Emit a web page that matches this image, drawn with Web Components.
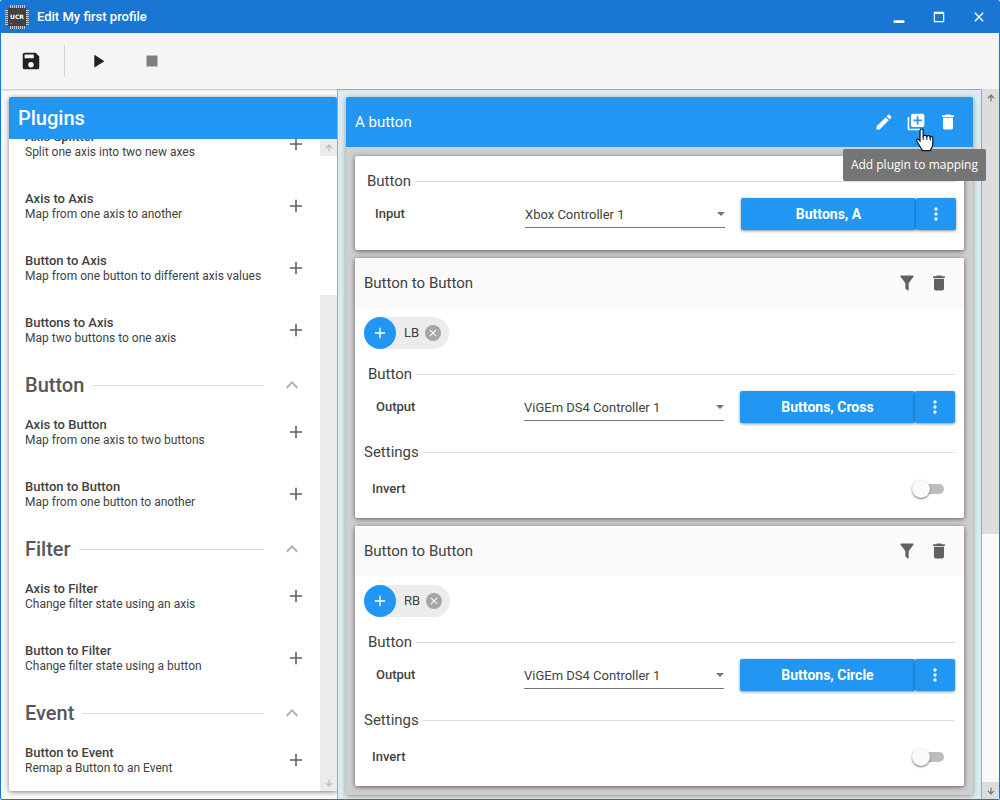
<!DOCTYPE html>
<html lang="en">
<head>
<meta charset="utf-8">
<title>Edit My first profile</title>
<style>
  html, body { height: 100%; margin: 0; }
  body { font-family: Roboto, "Liberation Sans", sans-serif; color: #424242; background: #fff; }
</style>
</head>
<body>

<ucr-window heading="Edit My first profile">
  <ucr-toolbar slot="toolbar"></ucr-toolbar>

  <ucr-plugin-panel slot="side" heading="Plugins">
    <ucr-plugin name="Axis Splitter">Split one axis into two new axes</ucr-plugin>
    <ucr-plugin name="Axis to Axis">Map from one axis to another</ucr-plugin>
    <ucr-plugin name="Button to Axis">Map from one button to different axis values</ucr-plugin>
    <ucr-plugin name="Buttons to Axis">Map two buttons to one axis</ucr-plugin>
    <ucr-category name="Button"></ucr-category>
    <ucr-plugin name="Axis to Button">Map from one axis to two buttons</ucr-plugin>
    <ucr-plugin name="Button to Button">Map from one button to another</ucr-plugin>
    <ucr-category name="Filter"></ucr-category>
    <ucr-plugin name="Axis to Filter">Change filter state using an axis</ucr-plugin>
    <ucr-plugin name="Button to Filter">Change filter state using a button</ucr-plugin>
    <ucr-category name="Event"></ucr-category>
    <ucr-plugin name="Button to Event">Remap a Button to an Event</ucr-plugin>
  </ucr-plugin-panel>

  <ucr-mapping heading="A button" hint="Add plugin to mapping">
    <ucr-card>
      <ucr-binding group="Button" label="Input" device="Xbox Controller 1" value="Buttons, A"></ucr-binding>
    </ucr-card>
    <ucr-card heading="Button to Button" filter="LB">
      <ucr-binding group="Button" label="Output" device="ViGEm DS4 Controller 1" value="Buttons, Cross"></ucr-binding>
      <ucr-setting group="Settings" label="Invert"></ucr-setting>
    </ucr-card>
    <ucr-card heading="Button to Button" filter="RB">
      <ucr-binding group="Button" label="Output" device="ViGEm DS4 Controller 1" value="Buttons, Circle"></ucr-binding>
      <ucr-setting group="Settings" label="Invert"></ucr-setting>
    </ucr-card>
  </ucr-mapping>
</ucr-window>

<script>
const ICONS = {
  save: 'M15,9H5V5H15M12,19A3,3 0 0,1 9,16A3,3 0 0,1 12,13A3,3 0 0,1 15,16A3,3 0 0,1 12,19M17,3H5C3.89,3 3,3.9 3,5V19A2,2 0 0,0 5,21H19A2,2 0 0,0 21,19V7L17,3Z',
  play: 'M8,5.14V19.14L19,12.14L8,5.14Z',
  stop: 'M18,18H6V6H18V18Z',
  pencil: 'M20.71,7.04C21.1,6.65 21.1,6 20.71,5.63L18.37,3.29C18,2.9 17.35,2.9 16.96,3.29L15.12,5.12L18.87,8.87M3,17.25V21H6.75L17.81,9.93L14.06,6.18L3,17.25Z',
  addBox: 'M4,6H2V20A2,2 0 0,0 4,22H18V20H4V6M20,2H8A2,2 0 0,0 6,4V16A2,2 0 0,0 8,18H20A2,2 0 0,0 22,16V4A2,2 0 0,0 20,2M19,11H15V15H13V11H9V9H13V5H15V9H19V11Z',
  trash: 'M19,4H15.5L14.5,3H9.5L8.5,4H5V6H19M6,19A2,2 0 0,0 8,21H16A2,2 0 0,0 18,19V7H6V19Z',
  plus: 'M18.2,12.8H12.8V18.2H11.2V12.8H5.8V11.2H11.2V5.8H12.8V11.2H18.2Z',
  chevron: 'M7.41,15.41L12,10.83L16.59,15.41L18,14L12,8L6,14L7.41,15.41Z',
  funnel: 'M14,12V19.88C14.04,20.18 13.94,20.5 13.71,20.71C13.32,21.1 12.69,21.1 12.3,20.71L10.29,18.7C10.06,18.47 9.96,18.16 10,17.87V12H9.97L4.21,4.62C3.87,4.19 3.95,3.56 4.38,3.22C4.57,3.08 4.78,3 5,3V3H19V3C19.22,3 19.43,3.08 19.62,3.22C20.05,3.56 20.13,4.19 19.79,4.62L14.03,12H14Z',
  dots: 'M12,16A2,2 0 0,1 14,18A2,2 0 0,1 12,20A2,2 0 0,1 10,18A2,2 0 0,1 12,16M12,10A2,2 0 0,1 14,12A2,2 0 0,1 12,14A2,2 0 0,1 10,12A2,2 0 0,1 12,10M12,4A2,2 0 0,1 14,6A2,2 0 0,1 12,8A2,2 0 0,1 10,6A2,2 0 0,1 12,4Z',
  cross: 'M19,6.41L17.59,5L12,10.59L6.41,5L5,6.41L10.59,12L5,17.59L6.41,19L12,13.41L17.59,19L19,17.59L13.41,12L19,6.41Z',
  minimize: 'M4,17H20V21H4Z',
  maximize: 'M3,3H21V21H3ZM5,7V19H19V7Z',
  arrowUp: 'M10.5,20V8.5L5.5,13.5L3.5,11.5L12,3L20.5,11.5L18.5,13.5L13.5,8.5V20Z',
  arrowDown: 'M10.5,4V15.5L5.5,10.5L3.5,12.5L12,21L20.5,12.5L18.5,10.5L13.5,15.5V4Z'
};
const icon = (name, size) =>
  `<svg width="${size}" height="${size}" viewBox="0 0 24 24" fill="currentColor" fill-rule="evenodd" aria-hidden="true"><path d="${ICONS[name]}"/></svg>`;

const BASE = `
  *, *::before { box-sizing: border-box; }
  svg { display: block; flex: none; }
  button { display: flex; align-items: center; justify-content: center; margin: 0; padding: 0; border: 0; background: none; font: inherit; color: inherit; cursor: pointer; }
  h1, h2, h3 { margin: 0; font-weight: 400; }
`;

class UcrElement extends HTMLElement {
  connectedCallback() {
    if (this.shadowRoot) return;
    this.attachShadow({ mode: 'open' }).innerHTML = `<style>${BASE}${this.styles()}</style>${this.render()}`;
    this.ready();
  }
  attr(name) { return this.getAttribute(name) || ''; }
  styles() { return ''; }
  render() { return '<slot></slot>'; }
  ready() {}
}

customElements.define('ucr-scrollbar', class extends UcrElement {
  styles() { return `
    :host { display: flex; flex-direction: column; width: 17px; flex: none; background: var(--track); color: var(--arrow); }
    .end { height: 17px; flex: none; background: var(--end); }
    .thumb { background: var(--thumb); flex: var(--size) 0 0; }
    .rest { flex: calc(1000 - var(--size)) 0 0; }
  `; }
  render() { return `
    <button class="end" aria-label="Scroll up">${icon('arrowUp', 10)}</button>
    <div class="thumb"></div><div class="rest"></div>
    <button class="end" aria-label="Scroll down">${icon('arrowDown', 10)}</button>
  `; }
});

customElements.define('ucr-logo', class extends UcrElement {
  styles() { return `
    :host { display: block; width: 24px; height: 24px; }
    text { font: 700 6px "DejaVu Sans", sans-serif; fill: #fff; }
  `; }
  render() {
    let pins = '';
    for (let i = 5; i < 20; i += 2) pins += `M${i}.5 0V24M0 ${i}.5H24`;
    return `<svg width="24" height="24" viewBox="0 0 24 24" role="img" aria-label="UCR">
      <path d="${pins}" stroke="#c8c8c8" stroke-width="1" fill="none"/>
      <rect x="3" y="3" width="18" height="18" rx="1" fill="#424242"/>
      <rect x="5" y="18" width="2" height="1" fill="#777"/>
      <text x="12" y="14" text-anchor="middle">UCR</text>
    </svg>`;
  }
});

customElements.define('ucr-window', class extends UcrElement {
  styles() { return `
    :host { display: flex; flex-direction: column; height: 100vh; box-sizing: border-box; border: 1px solid #1976d2; border-top: 0; border-radius: 2px; background: #fafafa; overflow: hidden; }
    header { display: flex; align-items: center; height: 33px; flex: none; padding-left: 4px; background: #1976d2; color: #fff; }
    h1 { flex: 1; margin-left: 8px; font-size: 13px; line-height: 16px; font-weight: 500; }
    header button { width: 40px; height: 33px; }
    ::slotted([slot=toolbar]) { flex: none; }
    main { display: flex; flex: 1; min-height: 0; }
    .side { display: flex; flex: 0 0 336px; min-width: 0; padding: 8px 0 8px 8px; }
    .side ::slotted(*) { flex: 1; min-width: 0; }
    .view { flex: 1; min-width: 0; padding: 7px 8px 3px; background: #dcebf2; border: 1px solid #6fb5dc; border-bottom: 0; }
    ucr-scrollbar { --track: #fafafa; --end: #dddddd; --thumb: #dddddd; --arrow: #757575; --size: 633; }
  `; }
  render() { return `
    <header>
      <ucr-logo></ucr-logo>
      <h1>${this.attr('heading')}</h1>
      <button aria-label="Minimize">${icon('minimize', 16)}</button>
      <button aria-label="Maximize">${icon('maximize', 14)}</button>
      <button aria-label="Close">${icon('cross', 16)}</button>
    </header>
    <slot name="toolbar"></slot>
    <main>
      <div class="side"><slot name="side"></slot></div>
      <div class="view"><slot></slot></div>
      <ucr-scrollbar></ucr-scrollbar>
    </main>
  `; }
});

customElements.define('ucr-toolbar', class extends UcrElement {
  styles() { return `
    :host { display: flex; align-items: center; height: 56px; padding-left: 6px; background: #f5f5f5; color: #212121; box-shadow: 0 1px 2px #0000003a; }
    button { width: 48px; height: 40px; }
    button:disabled { color: #808080; cursor: default; }
    .rule { width: 1px; height: 32px; margin: 0 9px; background: #d6d6d6; }
    .stop { margin-left: 6px; }
  `; }
  render() { return `
    <button aria-label="Save">${icon('save', 22)}</button>
    <div class="rule"></div>
    <button aria-label="Run">${icon('play', 22)}</button>
    <button class="stop" aria-label="Stop" disabled>${icon('stop', 22)}</button>
  `; }
});

customElements.define('ucr-plugin-panel', class extends UcrElement {
  styles() { return `
    :host { display: flex; flex-direction: column; border-radius: 2px; overflow: clip; background: #fff; box-shadow: 0 1px 5px #00000080; }
    h2 { height: 42px; flex: none; padding-left: 9px; font-size: 20px; line-height: 42px; font-weight: 500; color: #fff; background: #2196f3; }
    .body { display: flex; flex: 1; min-height: 0; }
    .list { flex: 1; min-width: 0; padding: 0 16px; overflow-y: scroll; scrollbar-width: none; }
    ucr-scrollbar { --track: #ebebeb; --end: #ebebeb; --thumb: #fff; --arrow: #bdbdbd; --size: 225; }
  `; }
  render() { return `
    <h2>${this.attr('heading')}</h2>
    <div class="body"><div class="list"><slot></slot></div><ucr-scrollbar></ucr-scrollbar></div>
  `; }
  ready() {
    const list = this.shadowRoot.querySelector('.list');
    requestAnimationFrame(() => { list.scrollTop = 22; });
  }
});

customElements.define('ucr-category', class extends UcrElement {
  styles() { return `
    :host { display: flex; align-items: center; height: 40px; }
    h3 { font-size: 20px; line-height: 24px; font-weight: 500; color: #575757; }
    .rule { flex: 1; height: 1px; margin: 0 16px 0 8px; background: #dedede; }
    button { width: 24px; height: 24px; color: #b0b0b0; }
  `; }
  render() { return `<h3>${this.attr('name')}</h3><div class="rule"></div><button aria-label="Collapse ${this.attr('name')}">${icon('chevron', 24)}</button>`; }
});

customElements.define('ucr-plugin', class extends UcrElement {
  styles() { return `
    :host { display: flex; align-items: center; height: 62px; box-sizing: border-box; padding: 12px 0 18px; font-size: 12px; line-height: 17px; color: #424242; }
    .text { flex: 1; min-width: 0; white-space: nowrap; }
    h3 { font-size: 13px; line-height: 15px; font-weight: 500; }
    button { width: 24px; height: 24px; margin: 0 -4px 2px 0; color: #616161; }
  `; }
  render() { return `<div class="text"><h3>${this.attr('name')}</h3><slot></slot></div><button aria-label="Add ${this.attr('name')}">${icon('plus', 24)}</button>`; }
});

customElements.define('ucr-mapping', class extends UcrElement {
  styles() { return `
    :host { display: block; border-radius: 2px; background: #cfcfcf; box-shadow: 0 1px 5px #00000060; }
    header { display: flex; align-items: center; height: 50px; padding: 0 9px; border-radius: 2px 2px 0 0; background: #2196f3; color: #fff; }
    h2 { flex: 1; font-size: 15px; line-height: 20px; }
    header button { width: 32px; height: 32px; }
    .add { position: relative; }
    .tip { position: absolute; top: 43px; right: -54px; z-index: 2; padding: 8px; border-radius: 2px; background: #757575; color: #fff; font: 12px/16px "Open Sans", "Noto Sans", sans-serif; white-space: nowrap; }
    .cursor { position: absolute; left: 16px; top: 22px; z-index: 3; }
    .cards { display: flex; flex-direction: column; gap: 8px; padding: 9px; }
  `; }
  render() { return `
    <header>
      <h2>${this.attr('heading')}</h2>
      <button aria-label="Rename mapping">${icon('pencil', 20)}</button>
      <div class="add">
        <button aria-label="Add plugin to mapping" aria-describedby="tip">${icon('addBox', 20)}</button>
        <div class="tip" id="tip" role="tooltip">${this.attr('hint')}</div>
        <svg class="cursor" width="18" height="24" viewBox="0 0 18 24" aria-hidden="true">
          <path d="M5.5 1C4.4 1 4 1.8 4 2.7V13L2.8 11.6C2.1 10.9 1.2 10.9.7 11.6.4 12.1.7 12.9 1.1 13.5L4.6 19.5C5.3 20.7 6.2 21.3 6.2 22.6H14.5C14.5 21 16.8 19.5 16.8 16V9.9C16.8 8.2 14.8 8 14.2 9.2 14.1 7.5 11.6 7.1 10.9 8.6 10.5 7.1 8.2 6.9 7.2 8V2.7C7.2 1.7 6.5 1 5.5 1Z" fill="#fff" stroke="#101020" stroke-width="1.2"/>
          <path d="M7.2 8V12M10.8 8.5V12M14.2 9V12.5" stroke="#101020" fill="none"/>
        </svg>
      </div>
      <button aria-label="Delete mapping">${icon('trash', 20)}</button>
    </header>
    <div class="cards"><slot></slot></div>
  `; }
});

customElements.define('ucr-card', class extends UcrElement {
  styles() { return `
    :host { display: block; border-radius: 2px; background: #fff; box-shadow: 0 1px 5px #00000090; }
    header { display: flex; align-items: center; height: 50px; padding: 0 9px; border-radius: 2px 2px 0 0; background: #fafafa; }
    h2 { flex: 1; font-size: 15px; line-height: 20px; }
    header button { width: 32px; height: 32px; color: #616161; }
    .chips { display: flex; padding: 9px 9px 0; }
    .chip { display: flex; align-items: center; height: 32px; padding-right: 8px; border-radius: 16px; background: #ececec; font-size: 13px; line-height: 16px; }
    .chip .add { width: 32px; height: 32px; border-radius: 50%; margin-right: 8px; background: #2196f3; color: #fff; }
    .chip .remove { width: 16px; height: 16px; border-radius: 50%; margin-left: 6px; background: #a6a6a6; color: #fff; }
    .body.plain { padding: 16px 8px 20px 12px; }
    .body.full { padding: 16px 9px 11px; }
  `; }
  render() {
    const full = this.hasAttribute('heading');
    const top = full ? `
      <header>
        <h2>${this.attr('heading')}</h2>
        <button aria-label="Filter">${icon('funnel', 20)}</button>
        <button aria-label="Delete plugin">${icon('trash', 20)}</button>
      </header>
      <div class="chips"><div class="chip">
        <button class="add" aria-label="Add filter">${icon('plus', 20)}</button>${this.attr('filter')}
        <button class="remove" aria-label="Remove filter">${icon('cross', 12)}</button>
      </div></div>` : '';
    return `${top}<div class="body ${full ? 'full' : 'plain'}"><slot></slot></div>`;
  }
});

const LEGEND = `
  .legend { display: flex; align-items: center; gap: 4px; font-size: 15px; line-height: 18px; }
  .legend::after { content: ""; flex: 1; height: 1px; background: #dedede; }
`;

customElements.define('ucr-binding', class extends UcrElement {
  styles() { return `${LEGEND}
    :host { display: block; }
    :host-context(ucr-card[heading]) .legend { margin-left: 4px; }
    :host-context(ucr-card[heading]) .row { padding-left: 12px; }
    .row { display: flex; align-items: center; height: 32px; margin-top: 8px; padding-left: 8px; }
    label { flex: 1; font-size: 13px; line-height: 16px; font-weight: 500; }
    .pick { position: relative; width: 200px; height: 28px; margin-right: 16px; border-bottom: 1px solid #757575; }
    select { appearance: none; width: 100%; height: 28px; padding: 0; border: 0; background: none; font: inherit; font-size: 13px; color: inherit; outline: 0; }
    .pick::after { content: ""; position: absolute; right: 0; top: 12px; border: 4px solid transparent; border-top-color: #757575; border-bottom: 0; pointer-events: none; }
    .row button { height: 32px; border-radius: 2px; background: #2196f3; color: #fff; box-shadow: 0 1px 3px #00000070; }
    .value { width: 175px; font-size: 14px; font-weight: 700; }
    .more { width: 40px; }
  `; }
  render() { return `
    <div class="legend">${this.attr('group')}</div>
    <div class="row">
      <label for="device">${this.attr('label')}</label>
      <div class="pick"><select id="device"><option>${this.attr('device')}</option></select></div>
      <button class="value">${this.attr('value')}</button><button class="more" aria-label="More">${icon('dots', 20)}</button>
    </div>
  `; }
});

customElements.define('ucr-setting', class extends UcrElement {
  styles() { return `${LEGEND}
    :host { display: block; margin-top: 20px; }
    .row { display: flex; align-items: center; height: 36px; margin-top: 10px; padding: 0 11px 0 8px; }
    label { flex: 1; font-size: 13px; line-height: 16px; font-weight: 500; }
    input { appearance: none; position: relative; width: 33px; height: 18px; margin: 0; }
    input::before { content: ""; position: absolute; left: 4px; right: 0; top: 4px; height: 10px; border-radius: 5px; background: #bdbdbd; }
    input::after { content: ""; position: absolute; left: 1px; top: 0; width: 18px; height: 18px; border-radius: 50%; background: #fafafa; box-shadow: 0 1px 2px #00000090; }
    input:checked::after { left: 15px; }
  `; }
  render() { return `
    <div class="legend">${this.attr('group')}</div>
    <div class="row"><label for="toggle">${this.attr('label')}</label><input id="toggle" type="checkbox" role="switch"></div>
  `; }
});
</script>
</body>
</html>
